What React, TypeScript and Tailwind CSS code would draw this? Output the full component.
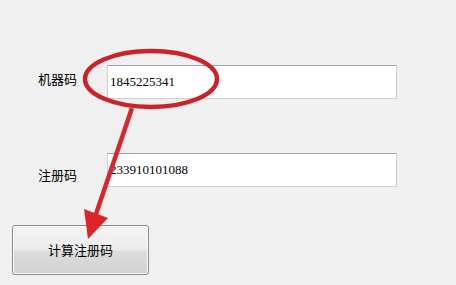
const cjk = { fontFamily: '"Noto Sans CJK SC", "Noto Sans", sans-serif' };
const digits = { fontFamily: '"Liberation Serif", "DejaVu Serif", serif' };

function Field({ label, value, labelOffset }: { label: string; value: string; labelOffset: string }) {
  return (
    <div className="flex items-start">
      <div className={`w-[107px] pl-[38px] text-[13px] leading-[17px] text-black ${labelOffset}`} style={cjk}>
        {label}
      </div>
      <div className="h-[34px] w-[290px] flex items-center pl-[2px] bg-white border border-[#c9cfd6] border-t-[#9aa6b2] text-[13px] text-black" style={digits}>
        {value}
      </div>
    </div>
  );
}

export default function App() {
  return (
    <div className="relative w-[456px] h-[285px] overflow-hidden bg-[#f0f0f0] pt-[65px]">
      <Field label="机器码" value="1845225341" labelOffset="mt-[5px]" />
      <div className="mt-[54px]">
        <Field label="注册码" value="233910101088" labelOffset="mt-[13px]" />
      </div>
      <button
        className="mt-[38px] ml-[12px] w-[137px] h-[50px] rounded-[3px] border border-[#8a8a8a] bg-[linear-gradient(#f4f4f4_0%,#ececec_50%,#dcdcdc_52%,#d2d2d2_100%)] text-[13px] text-black flex items-center justify-center shadow-[inset_0_0_0_1px_#fcfcfc]"
        style={cjk}
      >
        计算注册码
      </button>

      <svg className="absolute inset-0 pointer-events-none" width="456" height="285" viewBox="0 0 456 285">
        <ellipse cx="151" cy="79" rx="66" ry="28" fill="none" stroke="#cc232a" strokeWidth="4.5" />
        <line x1="132" y1="108" x2="96" y2="214" stroke="#d9262c" strokeWidth="4.5" />
        <polygon points="84,209 108,218 88,239" fill="#e02328" />
      </svg>
    </div>
  );
}
